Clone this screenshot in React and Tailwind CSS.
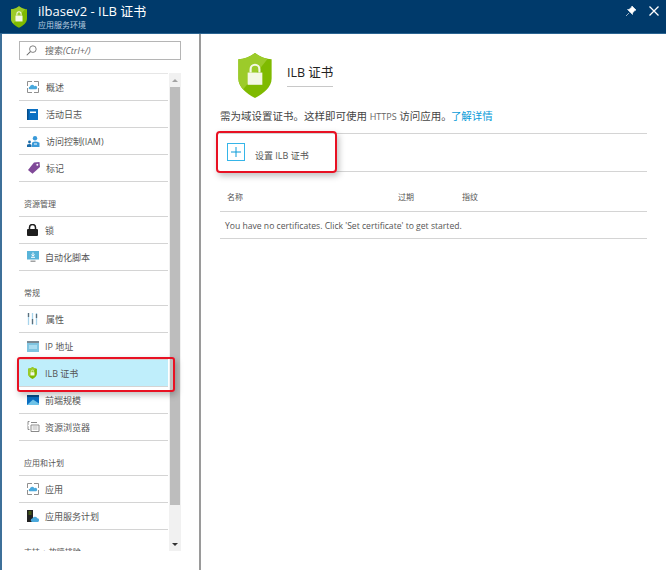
import React from "react";

const FONT = "font-['Open_Sans','Noto_Sans_CJK_SC',sans-serif]";

const Shield = ({ className }) => (
  <svg viewBox="0 0 34 46" className={className}>
    <path d="M17 0C12 4 6 6 0 6.5V26c0 9 8 15 17 20 9-5 17-11 17-20V6.5C28 6 22 4 17 0z" fill="#7fba00" />
    <path d="M17 0C12 4 6 6 0 6.5V26c0 4 2 8 5 11L30 6C25 5 21 3 17 0z" fill="#9ccb2a" />
    <rect x="9.5" y="20" width="15" height="12.5" fill="#f4f8e6" />
    <path d="M12.5 20v-3.5a4.5 4.5 0 0 1 9 0V20" fill="none" stroke="#f4f8e6" strokeWidth="2.2" />
  </svg>
);

// cloud inside a dashed square, used by overview and apps
const AppIcon = () => (
  <svg viewBox="0 0 12 12" className="w-[12px] h-[12px]">
    <path d="M.5 5V.5H5M7 .5h4.500V5M11.500 7v4.500H7M5 11.500H.5V7" fill="none" stroke="#8f8f8f" />
    <path d="M2.500 8.300a1.300 1.300 0 0 1 .4-2.500 2.400 2.400 0 0 1 4.600-.6 1.600 1.600 0 0 1 1.800 3.100z" fill="#4aa9dc" />
  </svg>
);

const LogIcon = () => (
  <svg viewBox="0 0 11 11" className="w-[11px] h-[11px]">
    <rect width="11" height="11" fill="#0a6fc2" />
    <rect width="1.500" height="11" fill="#054d8a" />
    <rect x="3" y="2.500" width="6" height="1.500" fill="#fff" />
  </svg>
);

const IamIcon = () => (
  <svg viewBox="0 0 13 11" className="w-[13px] h-[11px]">
    <circle cx="8" cy="2.300" r="2.200" fill="#3a9ad9" />
    <path d="M5 11V6.800Q8 4.300 12.500 6.800V11z" fill="#3a9ad9" />
    <circle cx="2.500" cy="6" r="1.400" fill="#1a6aa8" />
    <path d="M0 11V8.800Q2.500 7 4.500 8.800V11z" fill="#1a6aa8" />
    <rect x="7" y="7.500" width="3" height="1" fill="#fff" />
  </svg>
);

const TagIcon = () => (
  <svg viewBox="0 0 13 12" className="w-[13px] h-[12px]">
    <path d="M7 .5 12.500 0 13 5 5.500 11.800 1 8z" fill="#804998" />
    <circle cx="10.300" cy="2.700" r="1" fill="#fff" />
  </svg>
);

const LockIcon = () => (
  <svg viewBox="0 0 11 12" className="w-[11px] h-[12px]">
    <rect y="5" width="11" height="7" rx="1" fill="#1e1e1e" />
    <path d="M2.500 5.500V3.500a3 3 0 0 1 6 0v2" fill="none" stroke="#1e1e1e" strokeWidth="1.500" />
  </svg>
);

const ScriptIcon = () => (
  <svg viewBox="0 0 12 12" className="w-[12px] h-[12px]">
    <rect width="12" height="8.500" fill="#59b4d9" />
    <rect x="3.500" y="9.500" width="5" height="1.500" fill="#a0a1a2" />
    <path d="M6 1.500v3M4.500 3.500 6 5.200 7.500 3.500M4 6.300h4" fill="none" stroke="#fff" />
  </svg>
);

const PropsIcon = () => (
  <svg viewBox="0 0 11 12" className="w-[11px] h-[12px]">
    <path d="M1.500 0v12M5.500 0v12M9.500 0v12" stroke="#a8d4ec" strokeWidth="1.300" />
    <path d="M1.500 0v4M5.500 6v5M9.500 1v4" stroke="#5a6e7c" strokeWidth="1.300" />
  </svg>
);

const IpIcon = () => (
  <svg viewBox="0 0 12 11" className="w-[12px] h-[11px]">
    <rect width="12" height="11" fill="#7fc4e0" />
    <rect width="12" height="2" fill="#7a8a94" />
    <rect x="2" y="4" width="8" height="4" fill="#a9dcf0" />
  </svg>
);

const ScaleIcon = () => (
  <svg viewBox="0 0 12 10" className="w-[12px] h-[10px]">
    <rect width="12" height="10" fill="#0a6fc2" />
    <rect width="12" height="2" fill="#054d8a" />
    <path d="M0 10 6 4.500 12 8.500V10z" fill="#6fc3e8" />
  </svg>
);

const ExplorerIcon = () => (
  <svg viewBox="0 0 13 12" className="w-[13px] h-[12px]" fill="none">
    <path d="M2.500.5H1v3L0 4.500l1 1v3h1.500M4 1.500h6M4 4h8v6.500H4z" stroke="#8a8a8a" />
    <path d="M5.500 6h5M5.500 8h5" stroke="#b5b5b5" />
  </svg>
);

const PlanIcon = () => (
  <svg viewBox="0 0 12 12" className="w-[12px] h-[12px]">
    <rect width="6" height="12" fill="#222" />
    <path d="M1.500 2h3M1.500 4h3" stroke="#7fba00" strokeWidth=".7" />
    <path d="M5 12a1.800 1.800 0 0 1 .3-3.500 2.800 2.800 0 0 1 5-.3A2 2 0 0 1 11 12z" fill="#4aa9dc" />
  </svg>
);

const Row = ({ icon, label, active, indent }) => (
  <div className={`flex items-center h-[27px] pl-[8px] border-b border-[#d4d4d4] ${active ? "bg-[#bfeefb]" : ""}`}>
    <span className="w-[18px] flex shrink-0">{icon}</span>
    <span className={`text-[9px] leading-none text-[#555] ${indent ? "ml-[1px]" : ""}`}>{label}</span>
  </div>
);

const Section = ({ label }) => (
  <div className="flex items-end h-[35px] pb-[8px] pl-[5px] border-b border-[#d4d4d4] text-[8px] leading-none text-[#555]">
    {label}
  </div>
);

export default function App() {
  return (
    <div className={`w-[666px] h-[570px] flex flex-col bg-white overflow-hidden ${FONT}`}>
      <header className="h-[34px] shrink-0 flex items-center bg-[#003a6b] border-b border-[#2a6491] pl-[11px] pr-[7px]">
        <Shield className="w-[16px] h-[22px]" />
        <div className="ml-[11px] text-white">
          <div className="text-[13px] leading-[14px]">ilbasev2 - ILB 证书</div>
          <div className="text-[8px] leading-[9px] mt-[2px] text-[#b9cfe0]">应用服务环境</div>
        </div>
        <div className="ml-auto flex items-center gap-[13px] -mt-[11px]">
          <svg viewBox="0 0 10 10" className="w-[10px] h-[10px]">
            <path d="M6 0 10 4 8.800 4.500 6.500 7 6.500 8.500 1.500 3.500 3 3.500 5.500 1.200zM3.200 6.800 0 10" fill="#fff" stroke="#fff" strokeWidth=".6" />
          </svg>
          <svg viewBox="0 0 10 10" className="w-[10px] h-[10px]">
            <path d="M.5.500l9 9M9.500.500l-9 9" stroke="#fff" strokeWidth="1.300" />
          </svg>
        </div>
      </header>

      <div className="flex-1 flex min-h-0 border-l-2 border-[#3d7099]">
        {/* blade menu */}
        <aside className="w-[199px] shrink-0 border-r-2 border-[#9a9a9a] pl-[17px]">
          <div className="mt-[7px] w-[162px] h-[19px] flex items-center border border-[#b5b5b5]">
            <svg viewBox="0 0 12 12" className="ml-[6px] w-[11px] h-[11px]" fill="none">
              <circle cx="7.500" cy="4.500" r="3.600" stroke="#666" strokeWidth=".9" />
              <path d="M4.800 7.200.8 11.200" stroke="#666" strokeWidth="1.100" />
            </svg>
            <span className="ml-[8px] text-[9px] leading-none text-[#666]">
              搜索<span className="italic">(Ctrl+/)</span>
            </span>
          </div>

          <div className="mt-[13px] w-[162px] h-[478px] flex">
            <div className="w-[149px] shrink-0">
              <div className="h-[1px] bg-[#e6e6e6]" />
              <Row icon={<AppIcon />} label="概述" indent />
              <Row icon={<LogIcon />} label="活动日志" indent />
              <Row icon={<IamIcon />} label="访问控制(IAM)" indent />
              <Row icon={<TagIcon />} label="标记" indent />
              <Section label="资源管理" />
              <Row icon={<LockIcon />} label="锁" />
              <Row icon={<ScriptIcon />} label="自动化脚本" />
              <Section label="常规" />
              <Row icon={<PropsIcon />} label="属性" indent />
              <Row icon={<IpIcon />} label="IP 地址" />
              <div className="relative z-10">
                <Row icon={<Shield className="ml-[1px] w-[9px] h-[12px]" />} label="ILB 证书" active />
                <div className="absolute -left-[2px] -right-[7px] -top-[3px] -bottom-[5px] rounded-[3px] border-2 border-[#e81123] shadow-[2px_3px_6px_rgba(0,0,0,0.25)]" />
              </div>
              <Row icon={<ScaleIcon />} label="前端规模" />
              <Row icon={<ExplorerIcon />} label="资源浏览器" />
              <Section label="应用和计划" />
              <Row icon={<AppIcon />} label="应用" />
              <Row icon={<PlanIcon />} label="应用服务计划" />
              {/* next section is cut by the list's bottom edge */}
              <div className="h-[21px] overflow-hidden">
                <div className="pt-[17px] pl-[5px] text-[8px] leading-[10px] text-[#555]">支持 + 故障排除</div>
              </div>
            </div>
            {/* scrollbar */}
            <div className="ml-[1px] w-[12px] flex flex-col bg-[#f1f1f1]">
              <div className="h-[14px] flex items-center justify-center">
                <div className="border-x-[3px] border-b-[3px] border-x-transparent border-b-[#a3a3a3]" />
              </div>
              <div className="h-[418px] mx-[1px] bg-[#bdbdbd]" />
              <div className="mt-auto h-[14px] flex items-center justify-center">
                <div className="border-x-[3px] border-t-[3px] border-x-transparent border-t-[#333]" />
              </div>
            </div>
          </div>
        </aside>

        {/* blade content */}
        <main className="flex-1 min-w-0 pl-[19px] pr-[19px]">
          <div className="flex pl-[17px] pt-[19px]">
            <Shield className="ml-[1px] w-[34px] h-[45px]" />
            <div className="ml-[15px] mt-[12px] h-[22px] self-start border-b border-[#c8c8c8] text-[12.5px] leading-[15px] text-[#222]">
              ILB 证书
            </div>
          </div>
          <p className="mt-[10px] h-[16px] whitespace-nowrap text-[10.5px] leading-[16px] text-[#444]">
            需为域设置证书。这样即可使用 <span className="text-[9px] text-[#666]">HTTPS</span> 访问应用。
            <span className="-ml-[1px] text-[#0a9bd8]">了解详情</span>
          </p>
          <div className="mt-[9px] h-[39px] flex items-center border-y border-[#d4d4d4] pl-[7px]">
            <div className="relative h-[18px] -mt-[2px] flex items-center">
              <div className="w-[18px] h-[18px] flex items-center justify-center border border-[#35b5e8]">
                <svg viewBox="0 0 10 10" className="w-[10px] h-[10px]">
                  <path d="M5 0v10M0 5h10" stroke="#0a9bd8" />
                </svg>
              </div>
              <span className="ml-[10px] mt-[8px] text-[9px] leading-none text-[#555]">设置 ILB 证书</span>
              <div className="absolute -left-[11px] -right-[28px] -top-[12px] -bottom-[12px] rounded-[4px] border-2 border-[#e81123] shadow-[2px_3px_6px_rgba(0,0,0,0.25)]" />
            </div>
          </div>
          <div className="mt-[19px] h-[21px] flex items-start border-b border-[#d4d4d4] pl-[7px] text-[8px] leading-[12px] text-[#555]">
            <span className="w-[171px]">名称</span>
            <span className="w-[64px]">过期</span>
            <span>指纹</span>
          </div>
          <div className="h-[27px] flex items-center border-b border-[#d4d4d4] pl-[5px] pt-[2px] text-[8.6px] text-[#555]">
            You have no certificates. Click 'Set certificate' to get started.
          </div>
        </main>
      </div>
    </div>
  );
}
